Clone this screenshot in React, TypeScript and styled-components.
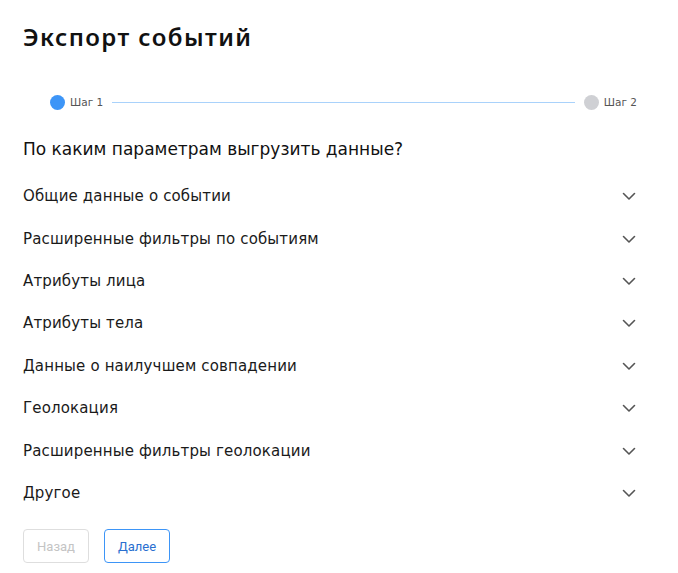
import styled, { createGlobalStyle } from "styled-components";

const GlobalStyle = createGlobalStyle`
  body {
    margin: 0;
    background: #fff;
    font-family: "DejaVu Sans", "Noto Sans", sans-serif;
    color: #1a1a1a;
  }
`;

const sections = [
  "Общие данные о событии",
  "Расширенные фильтры по событиям",
  "Атрибуты лица",
  "Атрибуты тела",
  "Данные о наилучшем совпадении",
  "Геолокация",
  "Расширенные фильтры геолокации",
  "Другое",
];

const Chevron = () => (
  <svg width="14" height="14" viewBox="0 0 14 14" fill="none">
    <path
      d="M1.5 4.5 L7 10 L12.5 4.5"
      stroke="#555"
      strokeWidth="1.6"
      strokeLinecap="round"
      strokeLinejoin="round"
    />
  </svg>
);

const App = () => {
  return (
    <Page>
      <GlobalStyle />
      <Title>Экспорт событий</Title>
      <Stepper>
        <Step>
          <Dot active />
          <StepLabel>Шаг 1</StepLabel>
        </Step>
        <Line />
        <Step>
          <Dot />
          <StepLabel>Шаг 2</StepLabel>
        </Step>
      </Stepper>
      <Question>По каким параметрам выгрузить данные?</Question>
      <List>
        {sections.map((s) => (
          <Row key={s}>
            <RowLabel>{s}</RowLabel>
            <Chevron />
          </Row>
        ))}
      </List>
      <Actions>
        <Button disabled>Назад</Button>
        <Button primary>Далее</Button>
      </Actions>
    </Page>
  );
};

const Page = styled.div`
  box-sizing: border-box;
  width: 678px;
  padding: 22px 41px 0 23px;
`;

const Title = styled.h1`
  margin: 0;
  font-family: "Noto Sans", sans-serif;
  font-size: 24px;
  font-weight: 600;
  letter-spacing: 1.4px;
  line-height: 30px;
  color: #111;
`;

const Stepper = styled.div`
  display: flex;
  align-items: center;
  margin: 42px 0 0 27px;
  height: 16px;
`;

const Step = styled.div`
  display: flex;
  align-items: center;
  gap: 5px;
`;

const Dot = styled.span<{ active?: boolean }>`
  width: 15px;
  height: 15px;
  border-radius: 50%;
  background: ${(p) => (p.active ? "#3d95f7" : "#cfd0d4")};
`;

const StepLabel = styled.span`
  font-size: 10.5px;
  color: #555;
`;

const Line = styled.div`
  flex: 1;
  height: 1px;
  background: #a9d2fb;
  margin: 0 9px 0 9px;
`;

const Question = styled.h2`
  margin: 28px 0 0;
  font-size: 17px;
  font-weight: 400;
  line-height: 22px;
  color: #111;
`;

const List = styled.div`
  margin-top: 15px;
  display: flex;
  flex-direction: column;
`;

const Row = styled.div`
  display: flex;
  align-items: center;
  justify-content: space-between;
  height: 42.4px;
  padding-right: 1px;
`;

const RowLabel = styled.span`
  font-size: 15px;
  letter-spacing: 0.15px;
  color: #1a1a1a;
`;

const Actions = styled.div`
  display: flex;
  gap: 15px;
  margin-top: 15px;
`;

const Button = styled.button<{ primary?: boolean }>`
  width: 66px;
  height: 34px;
  border-radius: 4px;
  background: #fff;
  font-family: "Roboto", sans-serif;
  font-size: 13px;
  cursor: pointer;
  border: 1px solid ${(p) => (p.primary ? "#3d95f7" : "#dedede")};
  color: ${(p) => (p.primary ? "#2a6fd0" : "#c4c4c4")};
  &:disabled {
    cursor: default;
  }
`;

export default App;
